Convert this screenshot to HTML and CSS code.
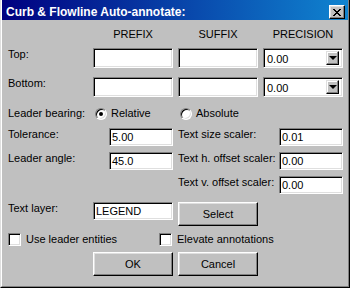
FILE: index.html
```html
<!DOCTYPE html>
<html lang="en">
<head>
    <meta charset="UTF-8">
    <title>Curb &amp; Flowline Auto-annotate</title>
    <link rel="stylesheet" href="styles.css">
</head>
<body>
    <div class="window">
        <div class="frame">
            <div class="titlebar">
                <span class="title">Curb &amp; Flowline Auto-annotate:</span>
                <span class="close">
                    <svg width="8" height="7" viewBox="0 0 8 7"><path d="M0 0h2v1h1v1h2V1h1V0h2v1H7v1H6v1H5v1h1v1h1v1h1v1H6V6H5V5H3v1H2v1H0V6h1V5h1V4h1V3H2V2H1V1H0z" fill="#000"/></svg>
                </span>
            </div>

            <div class="content">
                <div class="cols head">
                    <span></span>
                    <span>PREFIX</span>
                    <span>SUFFIX</span>
                    <span>PRECISION</span>
                </div>

                <div class="cols row-tall">
                    <span class="label">Top:</span>
                    <div class="edit"></div>
                    <div class="edit"></div>
                    <div class="combo">
                        <span class="combo-text">0.00</span>
                        <span class="arrow"><i></i></span>
                    </div>
                </div>

                <div class="cols row-tall gap-row">
                    <span class="label">Bottom:</span>
                    <div class="edit"></div>
                    <div class="edit"></div>
                    <div class="combo">
                        <span class="combo-text">0.00</span>
                        <span class="arrow"><i></i></span>
                    </div>
                </div>

                <div class="cols bearing">
                    <span class="label">Leader bearing:</span>
                    <span class="option"><span class="radio checked"></span>Relative</span>
                    <span class="option"><span class="radio"></span>Absolute</span>
                </div>

                <div class="params">
                    <span class="label">Tolerance:</span>
                    <div class="edit small">5.00</div>
                    <span class="label">Text size scaler:</span>
                    <div class="edit small">0.01</div>

                    <span class="label">Leader angle:</span>
                    <div class="edit small">45.0</div>
                    <span class="label">Text h. offset scaler:</span>
                    <div class="edit small">0.00</div>

                    <span></span>
                    <span></span>
                    <span class="label">Text v. offset scaler:</span>
                    <div class="edit small">0.00</div>
                </div>

                <div class="cols layer">
                    <span class="label">Text layer:</span>
                    <div class="edit small">LEGEND</div>
                    <div class="btn">Select</div>
                </div>

                <div class="checks">
                    <span class="check-item first"><span class="checkbox"></span>Use leader entities</span>
                    <span class="check-item"><span class="checkbox"></span>Elevate annotations</span>
                </div>

                <div class="cols actions">
                    <span></span>
                    <div class="btn">OK</div>
                    <div class="btn">Cancel</div>
                </div>
            </div>
        </div>
    </div>
</body>
</html>
```

FILE: styles.css
```css
body {
    margin: 0;
    font-family: "Liberation Sans", Arial, sans-serif;
    font-size: 11px;
    line-height: 13px;
    color: #000;
    background-color: #c0c0c0;
}
.window {
    width: 350px;
    height: 288px;
    box-sizing: border-box;
    background-color: #c0c0c0;
    border-left: 1px solid #dfdfdf;
    border-right: 1px solid #000;
    border-bottom: 1px solid #000;
}
.frame {
    height: 100%;
    box-sizing: border-box;
    border-left: 1px solid #fff;
    border-right: 1px solid #808080;
    border-bottom: 1px solid #808080;
}
.titlebar {
    height: 20px;
    display: flex;
    justify-content: space-between;
    background: linear-gradient(to right, #000080, #1084d0);
}
.title {
    color: #fff;
    font-weight: bold;
    font-size: 12px;
    line-height: 14px;
    padding: 5px 0 0 4px;
}
.close {
    align-self: flex-end;
    width: 16px;
    height: 14px;
    margin: 0 3px 1px 0;
    box-sizing: border-box;
    display: flex;
    align-items: center;
    justify-content: center;
    background-color: #c0c0c0;
    border: 1px solid;
    border-color: #fff #000 #000 #fff;
    box-shadow: inset -1px -1px #808080, inset 1px 1px #dfdfdf;
}
.close svg {
    display: block;
    margin-left: -1px;
}
.content {
    padding-left: 6px;
}
.cols {
    display: grid;
    grid-template-columns: 80px 80px 80px 80px;
    column-gap: 5px;
}
.head {
    margin-top: 8px;
    text-align: center;
}
.row-tall {
    margin-top: 7px;
    height: 20px;
}
.gap-row {
    margin-top: 9px;
}
.edit {
    box-sizing: border-box;
    height: 20px;
    background-color: #fff;
    border: 1px solid;
    border-color: #808080 #fff #fff #808080;
    box-shadow: inset 1px 1px #000, inset -1px -1px #dfdfdf;
    padding: 2px 0 0 2px;
    white-space: nowrap;
}
.edit.small {
    height: 18px;
    padding-top: 2px;
}
.combo {
    box-sizing: border-box;
    height: 20px;
    display: flex;
    justify-content: space-between;
    background-color: #fff;
    border: 1px solid;
    border-color: #808080 #fff #fff #808080;
    box-shadow: inset 1px 1px #000, inset -1px -1px #dfdfdf;
    padding: 2px;
}
.combo-text {
    padding: 2px 0 0 1px;
}
.arrow {
    width: 13px;
    height: 14px;
    box-sizing: border-box;
    margin-right: 1px;
    display: flex;
    align-items: center;
    justify-content: center;
    background-color: #c0c0c0;
    border: 1px solid;
    border-color: #dfdfdf #000 #000 #dfdfdf;
    box-shadow: inset -1px -1px #808080, inset 1px 1px #fff;
}
.arrow i {
    width: 0;
    height: 0;
    border-left: 4px solid transparent;
    border-right: 4px solid transparent;
    border-top: 4px solid #000;
}
.bearing {
    margin-top: 10px;
    height: 13px;
}
.option {
    display: flex;
    align-items: center;
    padding-left: 2px;
}
.radio {
    position: relative;
    width: 12px;
    height: 12px;
    box-sizing: border-box;
    margin-right: 4px;
    border-radius: 50%;
    background-color: #fff;
    border: 1px solid;
    border-color: #808080 #fff #fff #808080;
    box-shadow: inset 1px 1px #000, inset -1px -1px #dfdfdf;
}
.radio.checked::after {
    content: "";
    position: absolute;
    left: 3px;
    top: 3px;
    width: 4px;
    height: 4px;
    border-radius: 50%;
    background-color: #000;
}
.params {
    margin-top: 8px;
    display: grid;
    grid-template-columns: 101px 69px 101px 64px;
    grid-auto-rows: 18px;
    row-gap: 6px;
}
.params .edit {
    width: 64px;
}
.layer {
    margin-top: 8px;
}
.btn {
    box-sizing: border-box;
    height: 24px;
    display: flex;
    align-items: center;
    justify-content: center;
    background-color: #c0c0c0;
    border: 1px solid;
    border-color: #fff #000 #000 #fff;
    box-shadow: inset -1px -1px #808080, inset 1px 1px #dfdfdf;
}
.checks {
    margin-top: 7px;
    display: flex;
    height: 13px;
}
.check-item {
    display: flex;
    align-items: center;
}
.check-item.first {
    width: 151px;
}
.checkbox {
    width: 13px;
    height: 13px;
    box-sizing: border-box;
    margin-right: 5px;
    background-color: #fff;
    border: 1px solid;
    border-color: #808080 #fff #fff #808080;
    box-shadow: inset 1px 1px #000, inset -1px -1px #dfdfdf;
}
.actions {
    margin-top: 6px;
}
```
